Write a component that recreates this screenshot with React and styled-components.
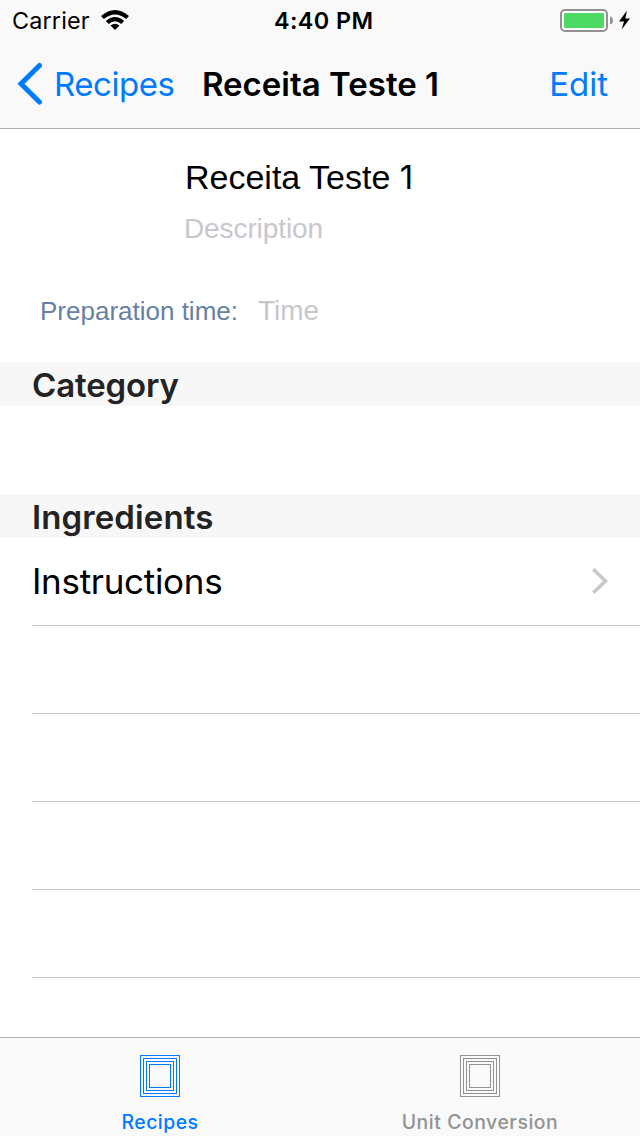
import React from "react";
import styled, { createGlobalStyle } from "styled-components";

const GlobalStyle = createGlobalStyle`
  * { box-sizing: border-box; }
  body { margin: 0; background: #fff; }
`;

const system = `Inter, "Liberation Sans", sans-serif`;
const helvetica = `"Liberation Sans", sans-serif`;

const Screen = styled.div`
  width: 640px;
  height: 1136px;
  display: flex;
  flex-direction: column;
  overflow: hidden;
  background: #fff;
  color: #000;
  font-family: ${system};
  white-space: nowrap;
`;

const Header = styled.header`
  height: 129px;
  background: #f9f9f9;
  border-bottom: 1px solid #b2b2b2;
`;

const StatusBar = styled.div`
  height: 40px;
  display: grid;
  grid-template-columns: 274px 1fr auto;
  line-height: 42px;
  font-size: 23.4px;
`;

const Carrier = styled.div`
  display: flex;
  padding-left: 12px;
  letter-spacing: 0.15px;
`;

const WifiIcon = styled.svg`
  margin: 9px 0 0 11px;
`;

const Clock = styled.div`
  font-weight: 600;
  letter-spacing: 0.4px;
`;

const Power = styled.div`
  display: flex;
  padding: 9px 8px 0 0;
`;

const NavBar = styled.nav`
  height: 88px;
  display: grid;
  grid-template-columns: 202px 1fr auto;
  line-height: 88px;
  font-size: 33px;
`;

const NavButton = styled.a`
  display: flex;
  color: #007aff;
  letter-spacing: ${(p) => p.$spacing || "0"};
  padding: ${(p) => p.$pad};
`;

const BackIcon = styled.svg`
  margin: 22px 11px 0 0;
`;

const Title = styled.h1`
  margin: 0;
  font-size: 33px;
  font-weight: 600;
  letter-spacing: 0;
`;

const Summary = styled.section`
  height: 233px;
  font-family: ${helvetica};
`;

const RecipeName = styled.div`
  padding: 23px 0 0 185px;
  font-size: 34px;
  line-height: 50px;
`;

const Numeral = styled.span`
  font-family: ${system};
  font-size: 33px;
`;

const Description = styled.div`
  padding-left: 184px;
  font-size: 28px;
  line-height: 54px;
  letter-spacing: -0.1px;
  color: #c7c7cd;
`;

const Preparation = styled.div`
  display: flex;
  align-items: baseline;
  padding: 30px 0 0 40px;
  line-height: 50px;
`;

const Label = styled.div`
  width: 218px;
  font-size: 26px;
  color: #6780a4;
`;

const Placeholder = styled.div`
  font-size: 28px;
  color: #c7c7cd;
`;

const SectionHeader = styled.h2`
  height: 44px;
  margin: 0;
  padding-left: 32px;
  background: #f7f7f7;
  color: #232323;
  font-size: 33px;
  font-weight: 600;
  line-height: 46px;
  letter-spacing: ${(p) => p.$spacing || "0"};
`;

const EmptyCell = styled.div`
  height: 88px;
`;

const List = styled.div`
  flex: 1;
  min-height: 0;
  overflow: hidden;
  padding-left: 32px;
`;

const Row = styled.div`
  height: 88px;
  display: flex;
  justify-content: space-between;
  padding-right: 31px;
  border-bottom: 1px solid #c8c7cc;
  font-size: 35px;
  line-height: 87px;
  letter-spacing: -0.3px;
`;

const Disclosure = styled.svg`
  margin-top: 29px;
`;

const TabBar = styled.nav`
  height: 99px;
  display: grid;
  grid-template-columns: 1fr 1fr;
  background: #f9f9f9;
  border-top: 1px solid #b2b2b2;
`;

const Tab = styled.a`
  display: flex;
  flex-direction: column;
  align-items: center;
  padding-top: 17px;
  color: ${(p) => (p.$active ? "#007aff" : "#929292")};
  font-size: 19.4px;
  font-weight: 500;
  line-height: 24px;
  letter-spacing: ${(p) => p.$spacing || "0"};
`;

const TabLabel = styled.span`
  margin-top: 13px;
`;

function Wifi() {
  return (
    <WifiIcon width="28" height="22" viewBox="0 0 28 22">
      <path d="M0 7.1Q14-5.1 28 7.1L25.1 10Q14 .8 2.9 10Z" />
      <path d="M4.8 12Q14 4 23.2 12L20.3 14.9Q14 9.8 7.7 14.9Z" />
      <path d="M9.5 16.6Q14 13 18.5 16.6L14 21Z" />
    </WifiIcon>
  );
}

function Battery() {
  return (
    <svg width="72" height="24" viewBox="560 9 72 24">
      <rect x="561" y="10" width="46" height="21" rx="4" fill="#fff" stroke="#929292" strokeWidth="2" />
      <rect x="564" y="13" width="40" height="15" rx="1" fill="#4cd964" />
      <path d="M610 16.4Q613 17.3 613 20.5Q613 23.7 610 24.6Z" fill="#929292" />
      <path d="M627 10.5L619 21.5H624L621.6 29.5L630 18.4H625.3Z" fill="#000" />
    </svg>
  );
}

function NestedFrames() {
  return (
    <svg width="40" height="42" fill="none" stroke="currentColor" shapeRendering="crispEdges">
      {[0, 3, 6, 9].map((i) => (
        <rect key={i} x={i + 0.5} y={i + 0.5} width={39 - 2 * i} height={41 - 2 * i} />
      ))}
    </svg>
  );
}

export default function App() {
  return (
    <Screen>
      <GlobalStyle />
      <Header>
        <StatusBar>
          <Carrier>Carrier<Wifi /></Carrier>
          <Clock>4:40 PM</Clock>
          <Power><Battery /></Power>
        </StatusBar>
        <NavBar>
          <NavButton $pad="0 0 0 17px" $spacing="-0.45px">
            <BackIcon width="26" height="43" viewBox="17 62 26 43" fill="none" stroke="#007aff" strokeWidth="5" strokeLinecap="round" strokeLinejoin="miter">
              <path d="M39.5 65.5L21 83.8L39.5 102" />
            </BackIcon>
            Recipes
          </NavButton>
          <Title>Receita Teste 1</Title>
          <NavButton $pad="0 32px 0 0">Edit</NavButton>
        </NavBar>
      </Header>
      <Summary>
        <RecipeName>Receita Teste <Numeral>1</Numeral></RecipeName>
        <Description>Description</Description>
        <Preparation>
          <Label>Preparation time:</Label>
          <Placeholder>Time</Placeholder>
        </Preparation>
      </Summary>
      <SectionHeader $spacing="-0.15px">Category</SectionHeader>
      <EmptyCell />
      <SectionHeader $spacing="0.1px">Ingredients</SectionHeader>
      <List>
        <Row>
          Instructions
          <Disclosure width="18" height="28" viewBox="0 0 18 28" fill="none" stroke="#c7c7cc" strokeWidth="3.6">
            <path d="M2.3 2.3L14.5 14L2.3 25.7" />
          </Disclosure>
        </Row>
        <Row />
        <Row />
        <Row />
        <Row />
      </List>
      <TabBar>
        <Tab $active $spacing="0.5px"><NestedFrames /><TabLabel>Recipes</TabLabel></Tab>
        <Tab $spacing="0.55px"><NestedFrames /><TabLabel>Unit Conversion</TabLabel></Tab>
      </TabBar>
    </Screen>
  );
}
